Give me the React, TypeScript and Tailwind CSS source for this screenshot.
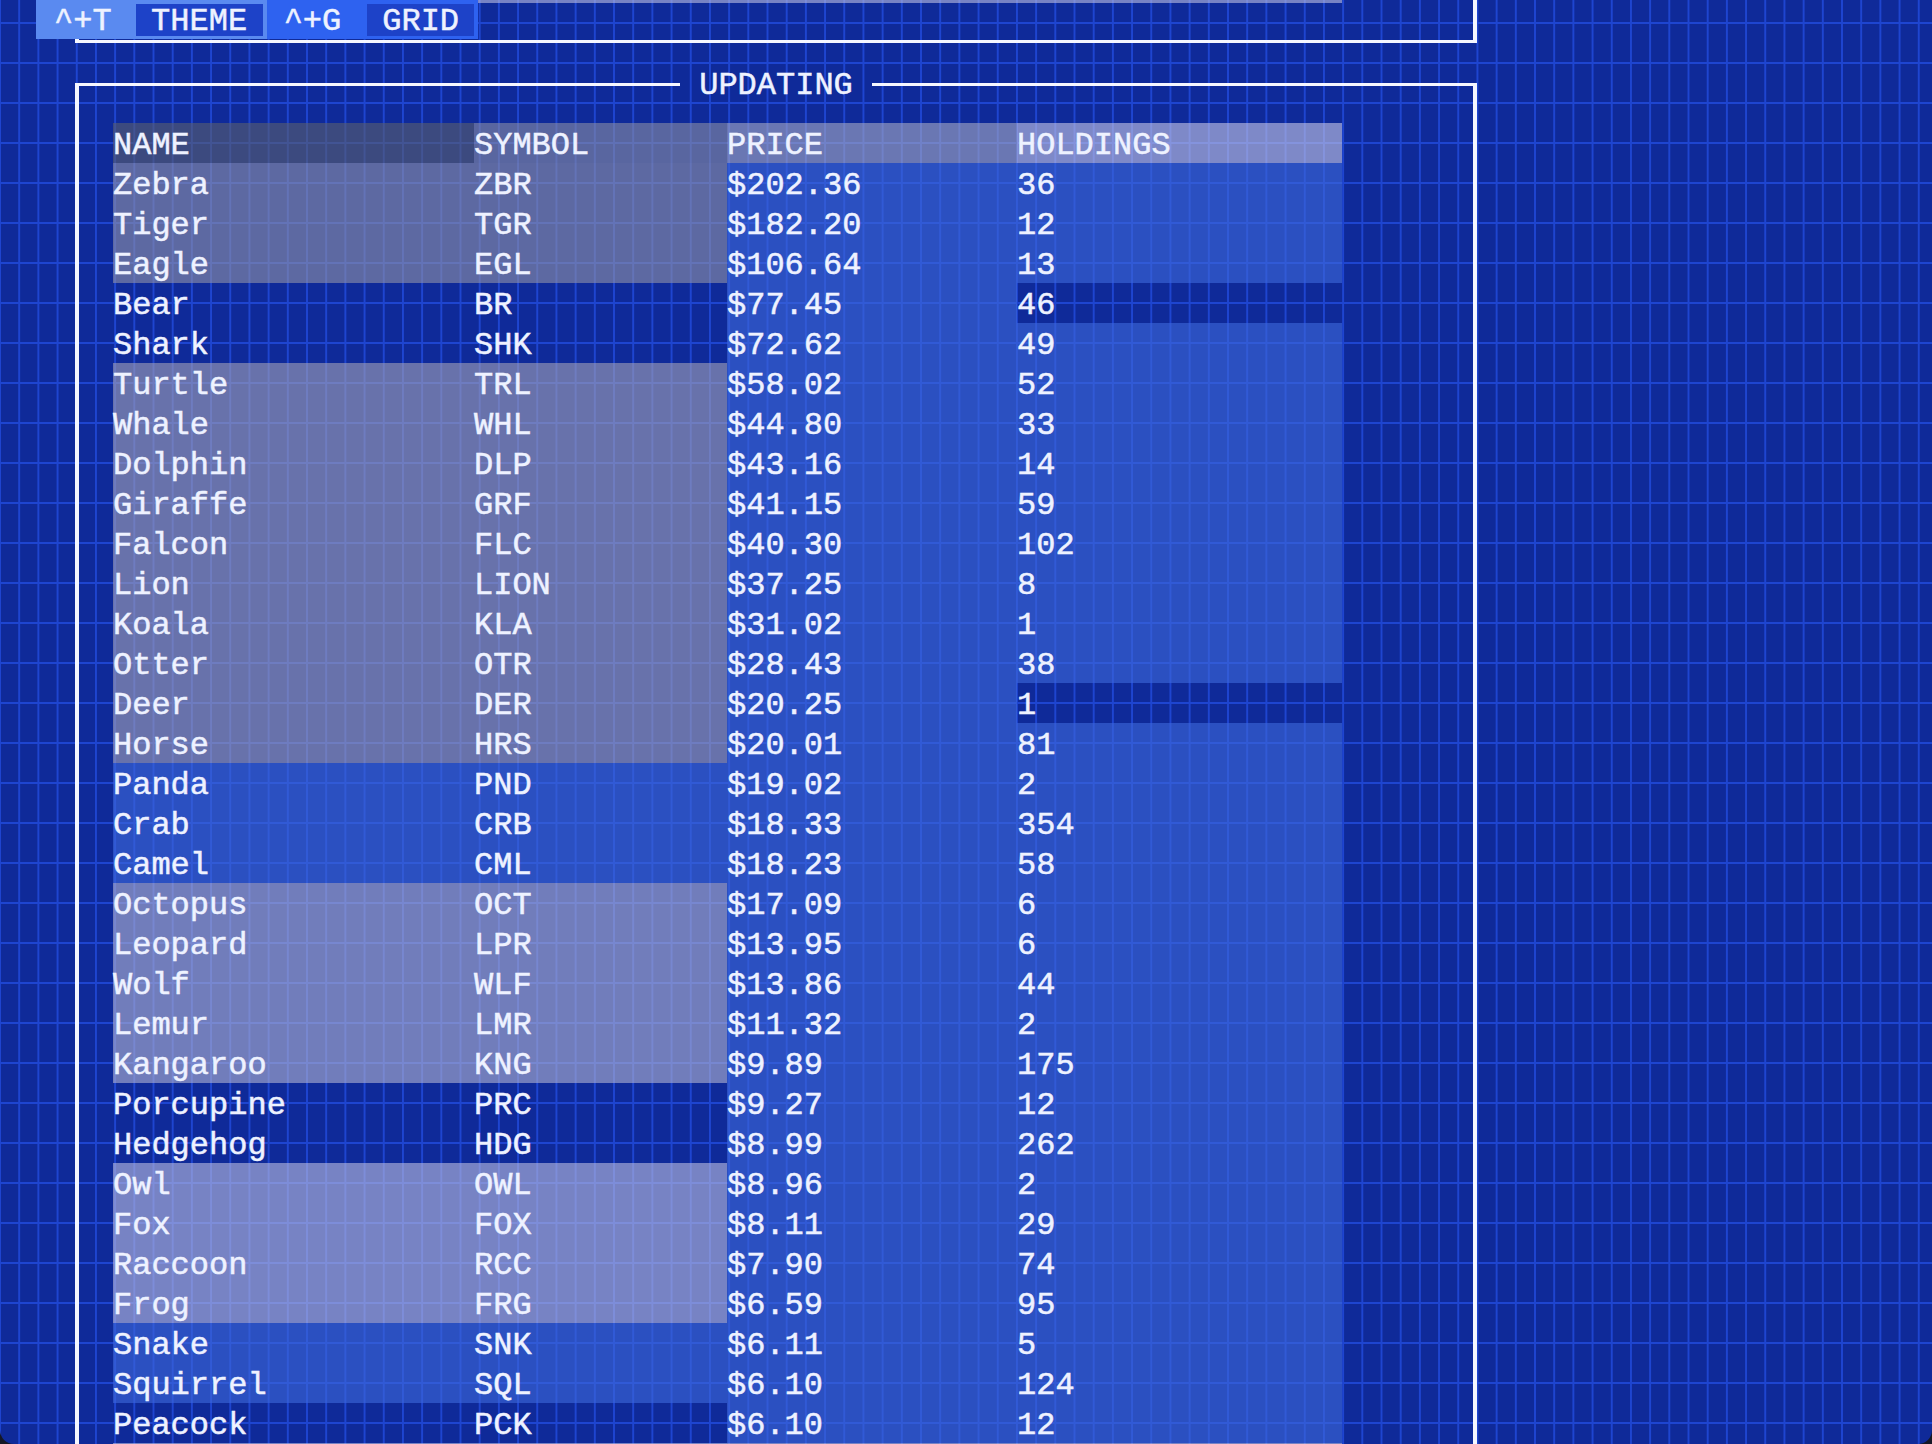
type Shade = 'g1' | 'g2' | 'g3' | 'g4' | 'blue' | 'dark';

interface Holding {
    name: string;
    symbol: string;
    price: string;
    holdings: string;
    shade: Shade;
    dimHoldings?: boolean;
}

const shadeBg: Record<Shade, string> = {
    g1: 'bg-[rgba(142,143,168,0.62)]',
    g2: 'bg-[rgba(159,158,182,0.62)]',
    g3: 'bg-[rgba(174,176,208,0.62)]',
    g4: 'bg-[rgba(184,186,222,0.62)]',
    blue: 'bg-[rgba(62,104,218,0.62)]',
    dark: '',
};

const blueBg = 'bg-[rgba(62,104,218,0.62)]';

const rows: Holding[] = [
    { name: 'Zebra', symbol: 'ZBR', price: '$202.36', holdings: '36', shade: 'g1' },
    { name: 'Tiger', symbol: 'TGR', price: '$182.20', holdings: '12', shade: 'g1' },
    { name: 'Eagle', symbol: 'EGL', price: '$106.64', holdings: '13', shade: 'g1' },
    { name: 'Bear', symbol: 'BR', price: '$77.45', holdings: '46', shade: 'dark', dimHoldings: true },
    { name: 'Shark', symbol: 'SHK', price: '$72.62', holdings: '49', shade: 'dark' },
    { name: 'Turtle', symbol: 'TRL', price: '$58.02', holdings: '52', shade: 'g2' },
    { name: 'Whale', symbol: 'WHL', price: '$44.80', holdings: '33', shade: 'g2' },
    { name: 'Dolphin', symbol: 'DLP', price: '$43.16', holdings: '14', shade: 'g2' },
    { name: 'Giraffe', symbol: 'GRF', price: '$41.15', holdings: '59', shade: 'g2' },
    { name: 'Falcon', symbol: 'FLC', price: '$40.30', holdings: '102', shade: 'g2' },
    { name: 'Lion', symbol: 'LION', price: '$37.25', holdings: '8', shade: 'g2' },
    { name: 'Koala', symbol: 'KLA', price: '$31.02', holdings: '1', shade: 'g2' },
    { name: 'Otter', symbol: 'OTR', price: '$28.43', holdings: '38', shade: 'g2' },
    { name: 'Deer', symbol: 'DER', price: '$20.25', holdings: '1', shade: 'g2', dimHoldings: true },
    { name: 'Horse', symbol: 'HRS', price: '$20.01', holdings: '81', shade: 'g2' },
    { name: 'Panda', symbol: 'PND', price: '$19.02', holdings: '2', shade: 'blue' },
    { name: 'Crab', symbol: 'CRB', price: '$18.33', holdings: '354', shade: 'blue' },
    { name: 'Camel', symbol: 'CML', price: '$18.23', holdings: '58', shade: 'blue' },
    { name: 'Octopus', symbol: 'OCT', price: '$17.09', holdings: '6', shade: 'g3' },
    { name: 'Leopard', symbol: 'LPR', price: '$13.95', holdings: '6', shade: 'g3' },
    { name: 'Wolf', symbol: 'WLF', price: '$13.86', holdings: '44', shade: 'g3' },
    { name: 'Lemur', symbol: 'LMR', price: '$11.32', holdings: '2', shade: 'g3' },
    { name: 'Kangaroo', symbol: 'KNG', price: '$9.89', holdings: '175', shade: 'g3' },
    { name: 'Porcupine', symbol: 'PRC', price: '$9.27', holdings: '12', shade: 'dark' },
    { name: 'Hedgehog', symbol: 'HDG', price: '$8.99', holdings: '262', shade: 'dark' },
    { name: 'Owl', symbol: 'OWL', price: '$8.96', holdings: '2', shade: 'g4' },
    { name: 'Fox', symbol: 'FOX', price: '$8.11', holdings: '29', shade: 'g4' },
    { name: 'Raccoon', symbol: 'RCC', price: '$7.90', holdings: '74', shade: 'g4' },
    { name: 'Frog', symbol: 'FRG', price: '$6.59', holdings: '95', shade: 'g4' },
    { name: 'Snake', symbol: 'SNK', price: '$6.11', holdings: '5', shade: 'blue' },
    { name: 'Squirrel', symbol: 'SQL', price: '$6.10', holdings: '124', shade: 'blue' },
    { name: 'Peacock', symbol: 'PCK', price: '$6.10', holdings: '12', shade: 'dark' },
];

const TableRow = ({ row }: { row: Holding }) => (
    <div className="grid h-[40px] grid-cols-[361px_253px_290px_325px] grid-rows-[40px] leading-[46px]">
        <div className={shadeBg[row.shade]}>{row.name}</div>
        <div className={shadeBg[row.shade]}>{row.symbol}</div>
        <div className={blueBg}>{row.price}</div>
        <div className={row.dimHoldings ? '' : blueBg}>{row.holdings}</div>
    </div>
);

const App = () => {
    return (
        <div className="h-[1444px] w-[1932px] bg-[#151826]">
            <div className="relative h-full w-full overflow-hidden rounded-b-[14px] bg-[#0f2a99] [background-image:linear-gradient(to_right,#1e45d0_0_1px,transparent_1px_18.2px,#1e45d0_18.2px),linear-gradient(to_bottom,transparent_0_22px,#1e45d0_22px_24px,transparent_24px)] [background-size:19.2px_40px] font-['Liberation_Mono','DejaVu_Sans_Mono',monospace] text-[32px] text-[#eef2ff] [-webkit-text-stroke:0.5px_#eef2ff]">
                {/* previous panel, scrolled almost out of view */}
                <div className="ml-[75px] h-[43px] w-[1402px] border-x-4 border-b-[3px] border-[#f5f7ff] pl-[34px]">
                    <div className="h-[3px] w-[1229px] bg-[rgba(184,186,222,0.62)]" />
                </div>

                {/* key hints */}
                <div className="absolute left-[36px] top-0 flex h-[39px] leading-[44px]">
                    <div className="flex bg-[#5a8af0] pl-[18px] pr-[4px]">
                        <span>^+T</span>
                        <span className="ml-[24px] mt-[4px] h-[32px] bg-[#1d42c8] px-[15.5px] leading-[36px]">THEME</span>
                    </div>
                    <div className="flex bg-[#2e62f0] pl-[17px] pr-[4px]">
                        <span>^+G</span>
                        <span className="ml-[26px] mt-[4px] h-[32px] bg-[#1d42c8] px-[15px] leading-[36px]">GRID</span>
                    </div>
                </div>

                {/* updating panel */}
                <div className="ml-[75px] mt-[20px] w-[1402px]">
                    <div className="flex h-[40px]">
                        <div className="mt-[20px] h-[20px] flex-1 border-l-4 border-t-[3px] border-[#f5f7ff]" />
                        <div className="px-[19.2px] leading-[46px]">UPDATING</div>
                        <div className="mt-[20px] h-[20px] flex-1 border-r-4 border-t-[3px] border-[#f5f7ff]" />
                    </div>
                    <div className="border-x-4 border-[#f5f7ff] pl-[34px] pt-[20px]">
                        <div className="grid h-[40px] grid-cols-[361px_253px_290px_325px] grid-rows-[40px] leading-[46px]">
                            <div className="bg-[rgba(88,93,111,0.62)]">NAME</div>
                            <div className="bg-[rgba(136,138,164,0.62)]">SYMBOL</div>
                            <div className="bg-[rgba(163,166,195,0.62)]">PRICE</div>
                            <div className="bg-[rgba(196,195,229,0.62)]">HOLDINGS</div>
                        </div>
                        {rows.map((row) => (
                            <TableRow key={row.symbol + row.name} row={row} />
                        ))}
                        <div className="h-[40px] w-[1229px] bg-[rgba(184,186,222,0.62)]" />
                    </div>
                </div>
            </div>
        </div>
    );
};

export default App;
